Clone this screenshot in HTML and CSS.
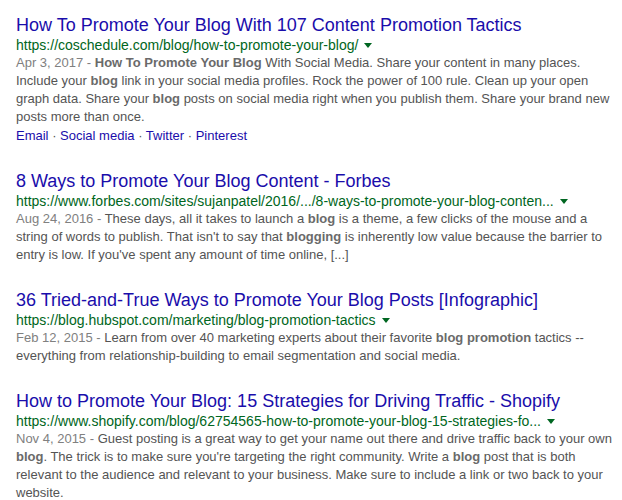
FILE: index.html
```html
<!DOCTYPE html>
<html lang="en">
<head>
    <meta charset="UTF-8">
    <title>Search results</title>
    <link rel="stylesheet" href="styles.css">
</head>
<body>

    <div class="results">
        <div class="g">
            <h3 class="r"><a href="#">How To Promote Your Blog With 107 Content Promotion Tactics</a></h3>
            <div class="url">https://coschedule.com/blog/how-to-promote-your-blog/<span class="arrow"></span></div>
            <div class="st"><span class="date">Apr 3, 2017 - </span><b>How To Promote Your Blog</b> With Social Media. Share your content in many places. Include your <b>blog</b> link in your social media profiles. Rock the power of 100 rule. Clean up your open graph data. Share your <b>blog</b> posts on social media right when you publish them. Share your brand new posts more than once.</div>
            <div class="links"><a href="#">Email</a> · <a href="#">Social media</a> · <a href="#">Twitter</a> · <a href="#">Pinterest</a></div>
        </div>

        <div class="g">
            <h3 class="r"><a href="#">8 Ways to Promote Your Blog Content - Forbes</a></h3>
            <div class="url">https://www.forbes.com/sites/sujanpatel/2016/.../8-ways-to-promote-your-blog-conten...<span class="arrow"></span></div>
            <div class="st"><span class="date">Aug 24, 2016 - </span>These days, all it takes to launch a <b>blog</b> is a theme, a few clicks of the mouse and a string of words to publish. That isn't to say that <b>blogging</b> is inherently low value because the barrier to entry is low. If you've spent any amount of time online, [...]</div>
        </div>

        <div class="g">
            <h3 class="r"><a href="#">36 Tried-and-True Ways to Promote Your Blog Posts [Infographic]</a></h3>
            <div class="url">https://blog.hubspot.com/marketing/blog-promotion-tactics<span class="arrow"></span></div>
            <div class="st"><span class="date">Feb 12, 2015 - </span>Learn from over 40 marketing experts about their favorite <b>blog promotion</b> tactics -- everything from relationship-building to email segmentation and social media.</div>
        </div>

        <div class="g">
            <h3 class="r"><a href="#">How to Promote Your Blog: 15 Strategies for Driving Traffic - Shopify</a></h3>
            <div class="url">https://www.shopify.com/blog/62754565-how-to-promote-your-blog-15-strategies-fo...<span class="arrow"></span></div>
            <div class="st"><span class="date">Nov 4, 2015 - </span>Guest posting is a great way to get your name out there and drive traffic back to your own <b>blog</b>. The trick is to make sure you're targeting the right community. Write a <b>blog</b> post that is both relevant to the audience and relevant to your business. Make sure to include a link or two back to your website.</div>
        </div>
    </div>

</body>
</html>
```

FILE: styles.css
```css
/* Search result list */
body {
    font-family: "Liberation Sans", Arial, sans-serif;
    margin: 0;
    padding: 0;
    background-color: #fff;
}

.results {
    padding: 14px 0 0 16px;
}

.g {
    margin-bottom: 25px;
}

.r {
    margin: 0;
    font-size: 18px;
    font-weight: normal;
    line-height: 22px;
    white-space: nowrap;
}

.r a {
    color: #1a0dab;
    text-decoration: none;
}

.url {
    color: #006621;
    font-size: 14px;
    line-height: 18px;
    white-space: nowrap;
}

.arrow {
    display: inline-block;
    margin-left: 6px;
    vertical-align: 2px;
    border-style: solid;
    border-width: 5px 4px 0 4px;
    border-color: #006621 transparent transparent transparent;
}

.st {
    color: #545454;
    font-size: 13px;
    line-height: 18px;
}

.st b {
    color: #6a6a6a;
}

.date {
    color: #808080;
}

.links {
    color: #545454;
    font-size: 13px;
    line-height: 19px;
}

.links a {
    color: #1a0dab;
    text-decoration: none;
}
```
